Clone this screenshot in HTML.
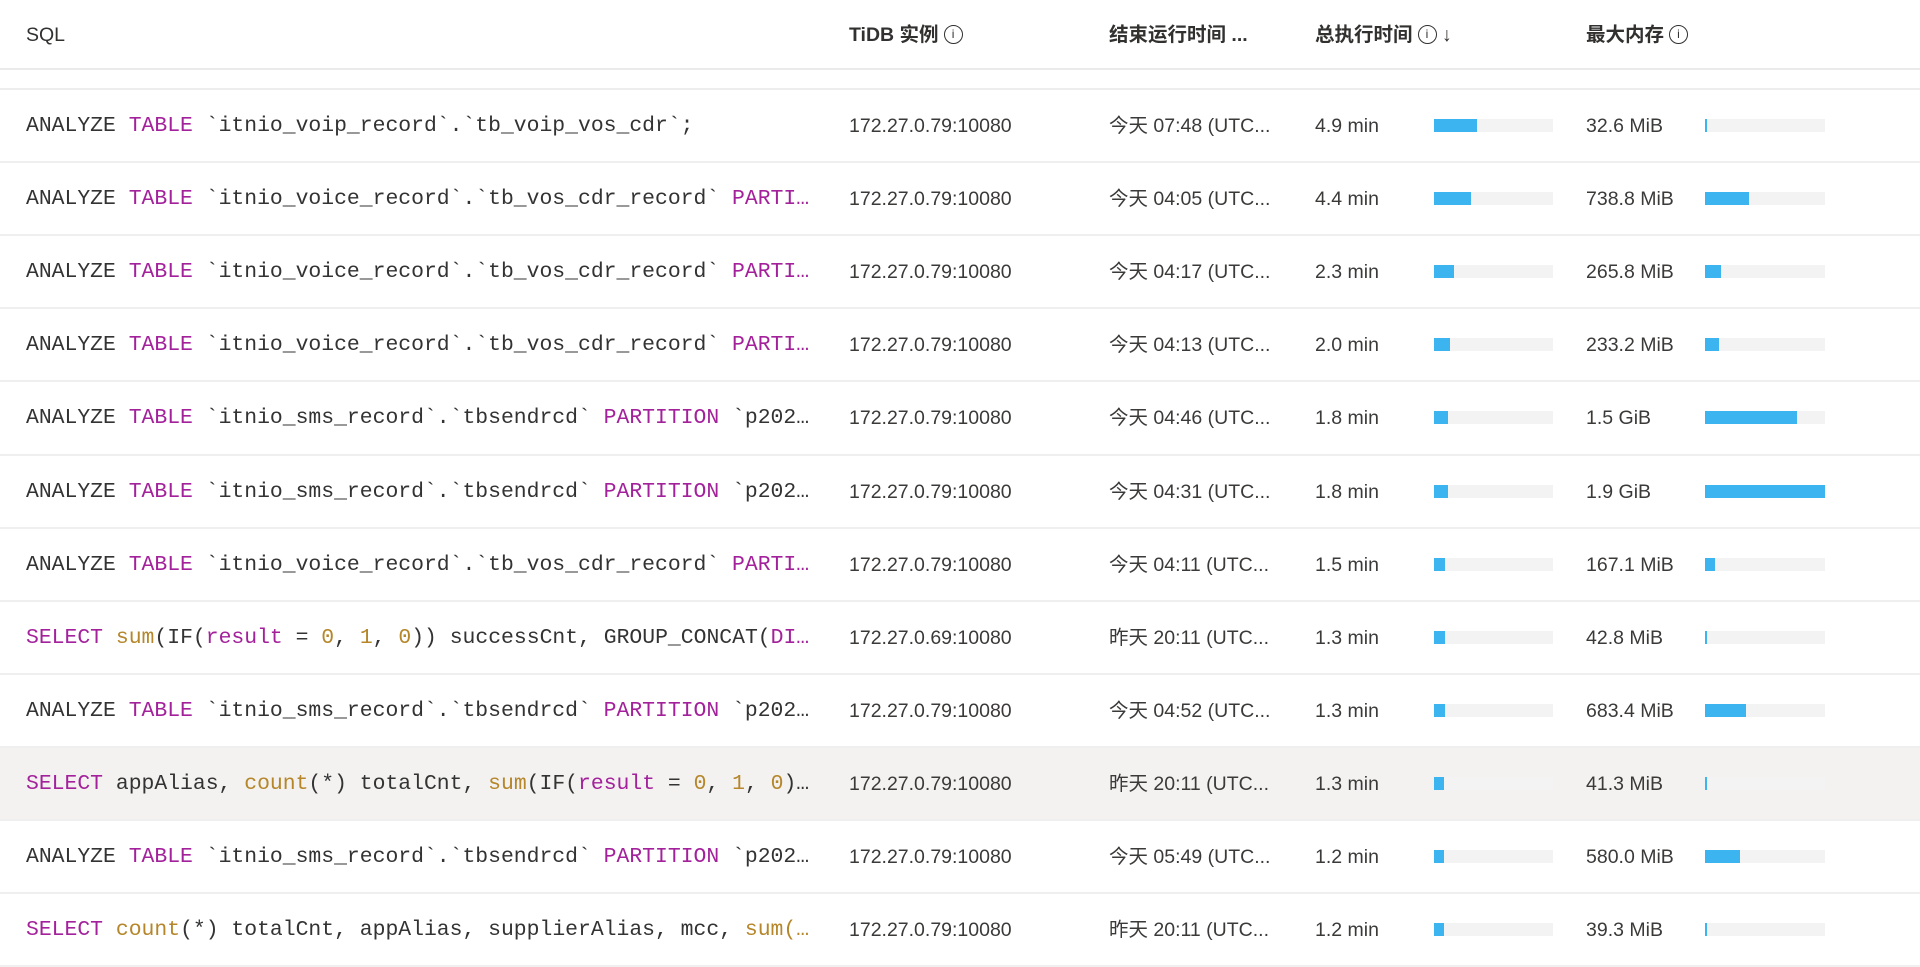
<!DOCTYPE html>
<html><head><meta charset="utf-8"><style>
body{margin:0;width:1920px;height:967px;background:#fff;overflow:hidden;position:relative;font-family:"Liberation Sans","Noto Sans CJK SC",sans-serif;color:#323130}
.h{position:absolute;top:0;left:0;width:1920px;height:70px;border-bottom:2px solid #ebebeb;box-sizing:border-box}
.h>span{position:absolute;top:0;line-height:70px;font-size:19.5px;font-weight:600;color:#323130;white-space:nowrap}
.i{display:inline-block;width:17px;height:17px;border:1.5px solid #323130;border-radius:50%;font-size:12px;line-height:17px;text-align:center;font-weight:400;vertical-align:middle;margin-left:5px;margin-top:-3px}
.sep{position:absolute;top:88px;left:0;width:1920px;border-top:2px solid #ededed}
.r{position:absolute;left:0;width:1920px;height:73.2px;border-bottom:2px solid #efefef;box-sizing:border-box}
.r div{position:absolute;top:0;line-height:72px;white-space:nowrap;font-size:19.5px;color:#3b3a39}
.s{left:26px;font-family:"Liberation Mono",monospace;font-size:21.4px!important;color:#333!important}
.k{color:#a3219b}.f{color:#b5862a}
.t{position:absolute;height:13px;top:29px;background:#f3f3f3}
.t b{display:block;height:13px;background:#3cb4ef}
</style></head><body>
<div class="h">
<span style="left:26px;font-weight:500">SQL</span>
<span style="left:849px">TiDB 实例<span class="i">i</span></span>
<span style="left:1109px">结束运行时间 ...</span>
<span style="left:1315px">总执行时间<span class="i">i</span> <span style="font-weight:400">↓</span></span>
<span style="left:1586px">最大内存<span class="i">i</span></span>
</div>
<div class="sep"></div>
<div id="rows"></div>
<script>
var A='ANALYZE <span class="k">TABLE</span> ';
var d=[
[A+'`itnio_voip_record`.`tb_voip_vos_cdr`;','172.27.0.79:10080','今天 07:48 (UTC...','4.9 min',43,'32.6 MiB',2],
[A+'`itnio_voice_record`.`tb_vos_cdr_record` <span class="k">PARTI…</span>','172.27.0.79:10080','今天 04:05 (UTC...','4.4 min',37,'738.8 MiB',44],
[A+'`itnio_voice_record`.`tb_vos_cdr_record` <span class="k">PARTI…</span>','172.27.0.79:10080','今天 04:17 (UTC...','2.3 min',20,'265.8 MiB',16],
[A+'`itnio_voice_record`.`tb_vos_cdr_record` <span class="k">PARTI…</span>','172.27.0.79:10080','今天 04:13 (UTC...','2.0 min',16,'233.2 MiB',14],
[A+'`itnio_sms_record`.`tbsendrcd` <span class="k">PARTITION</span> `p202…','172.27.0.79:10080','今天 04:46 (UTC...','1.8 min',14,'1.5 GiB',92],
[A+'`itnio_sms_record`.`tbsendrcd` <span class="k">PARTITION</span> `p202…','172.27.0.79:10080','今天 04:31 (UTC...','1.8 min',14,'1.9 GiB',120],
[A+'`itnio_voice_record`.`tb_vos_cdr_record` <span class="k">PARTI…</span>','172.27.0.79:10080','今天 04:11 (UTC...','1.5 min',11,'167.1 MiB',10],
['<span class="k">SELECT</span> <span class="f">sum</span>(IF(<span class="k">result</span> = <span class="f">0</span>, <span class="f">1</span>, <span class="f">0</span>)) successCnt, GROUP_CONCAT(<span class="k">DI…</span>','172.27.0.69:10080','昨天 20:11 (UTC...','1.3 min',11,'42.8 MiB',2],
[A+'`itnio_sms_record`.`tbsendrcd` <span class="k">PARTITION</span> `p202…','172.27.0.79:10080','今天 04:52 (UTC...','1.3 min',11,'683.4 MiB',41],
['<span class="k">SELECT</span> appAlias, <span class="f">count</span>(*) totalCnt, <span class="f">sum</span>(IF(<span class="k">result</span> = <span class="f">0</span>, <span class="f">1</span>, <span class="f">0</span>)…','172.27.0.79:10080','昨天 20:11 (UTC...','1.3 min',10,'41.3 MiB',2],
[A+'`itnio_sms_record`.`tbsendrcd` <span class="k">PARTITION</span> `p202…','172.27.0.79:10080','今天 05:49 (UTC...','1.2 min',10,'580.0 MiB',35],
['<span class="k">SELECT</span> <span class="f">count</span>(*) totalCnt, appAlias, supplierAlias, mcc, <span class="f">sum(…</span>','172.27.0.79:10080','昨天 20:11 (UTC...','1.2 min',10,'39.3 MiB',2]
];
var h='';
d.forEach(function(r,i){
var top=90+73.1*i;
h+='<div class="r" style="top:'+top+'px;'+(i==9?'background:#f3f2f1;':'')+'">'+
'<div class="s">'+r[0]+'</div>'+
'<div style="left:849px">'+r[1]+'</div>'+
'<div style="left:1109px">'+r[2]+'</div>'+
'<div style="left:1315px">'+r[3]+'</div>'+
'<span class="t" style="left:1434px;width:119px"><b style="width:'+r[4]+'px"></b></span>'+
'<div style="left:1586px">'+r[5]+'</div>'+
'<span class="t" style="left:1705px;width:120px"><b style="width:'+r[6]+'px"></b></span></div>';
});
document.getElementById('rows').innerHTML=h;
</script>
</body></html>
